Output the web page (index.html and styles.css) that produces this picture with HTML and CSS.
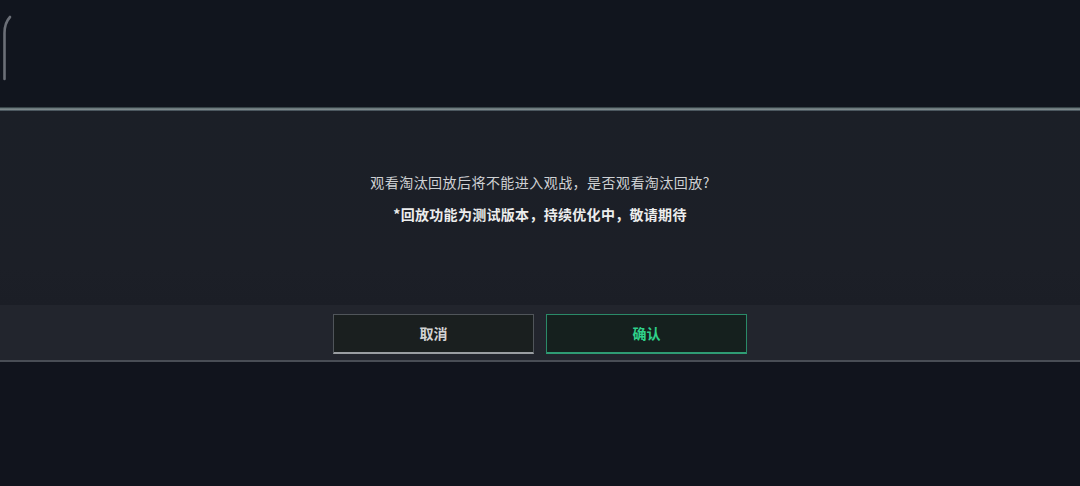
FILE: index.html
```html
<!DOCTYPE html>
<html lang="zh">
<head>
<meta charset="utf-8">
<link rel="stylesheet" href="styles.css">
</head>
<body>
<div class="page">
  <div class="top">
    <svg class="curve" width="14" height="70" viewBox="0 0 14 70">
      <path d="M4.5 68 L4.5 22 Q4.5 12 10 6" fill="none" stroke="#6b6f77" stroke-width="2.6" stroke-linecap="round"/>
    </svg>
  </div>
  <div class="dialog">
    <div class="edge"></div>
    <div class="body">
      <p class="msg">观看淘汰回放后将不能进入观战，是否观看淘汰回放?</p>
      <p class="note">*回放功能为测试版本，持续优化中，敬请期待</p>
    </div>
    <div class="footer">
      <button class="btn cancel">取消</button>
      <button class="btn confirm">确认</button>
    </div>
    <div class="bottom-line"></div>
  </div>
  <div class="rest"></div>
</div>
</body>
</html>
```
FILE: styles.css
```css
html, body {
  margin: 0;
  padding: 0;
  background: #11151e;
  width: 1080px;
  height: 486px;
  overflow: hidden;
  font-family: "Noto Sans CJK SC", "Noto Sans", sans-serif;
}
.page {
  display: flex;
  flex-direction: column;
  height: 486px;
}
.top {
  height: 107px;
  background: #11151e;
  padding-top: 11px;
  box-sizing: border-box;
}
.curve {
  display: block;
}
.dialog {
  display: flex;
  flex-direction: column;
}
.edge {
  height: 4px;
  background: linear-gradient(to bottom, #1f2b30 0, #5d6b6f 30%, #8a9597 55%, #33404a 100%);
}
.body {
  height: 194px;
  background: linear-gradient(to bottom, #1b1f27 0, #1c1f27 80%, #1b1e26 100%);
  display: flex;
  flex-direction: column;
  align-items: center;
  padding-top: 60px;
  box-sizing: border-box;
}
.msg {
  margin: 0;
  font-size: 14px;
  line-height: 22px;
  letter-spacing: 0.45px;
  color: #cfd1d4;
}
.note {
  margin: 10px 0 0;
  font-size: 14px;
  font-weight: bold;
  line-height: 22px;
  letter-spacing: 0.3px;
  color: #eceded;
}
.footer {
  height: 55px;
  background: #22252d;
  display: flex;
  justify-content: center;
  align-items: center;
  gap: 12px;
  padding-top: 3px;
  box-sizing: border-box;
}
.btn {
  width: 201px;
  height: 40px;
  box-sizing: border-box;
  font-family: "Noto Sans CJK SC", "Noto Sans", sans-serif;
  font-size: 14px;
  font-weight: bold;
  padding: 0 0 2px;
  cursor: pointer;
}
.cancel {
  background: #1a1f1f;
  border: 1px solid #50555a;
  border-bottom: 2px solid #9a9ea2;
  color: #d2d3d4;
}
.confirm {
  background: #15201e;
  border: 1px solid #2a8a68;
  border-bottom: 2px solid #2f9c74;
  color: #2fd08a;
}
.bottom-line {
  height: 2px;
  background: #494d55;
}
.rest {
  flex: 1;
  background: #11141d;
}
```
